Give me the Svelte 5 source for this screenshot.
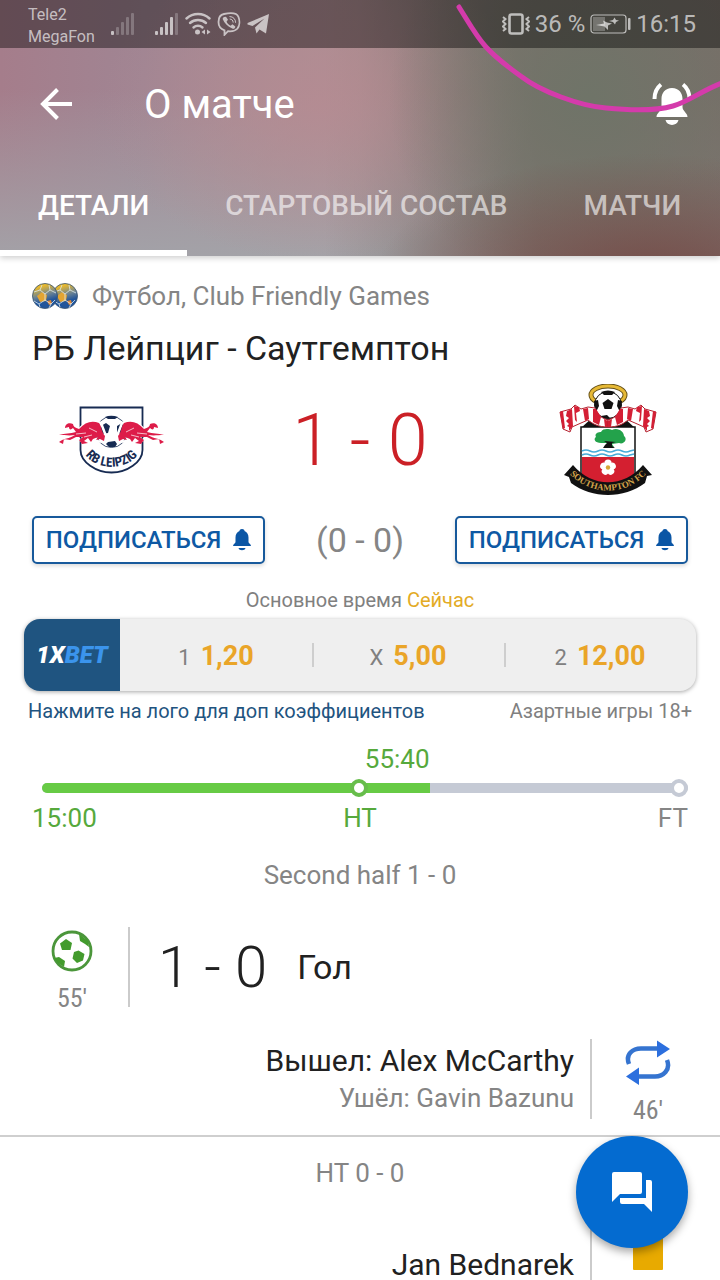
<script lang="ts">
    type Odd = { label: string; value: string };

    const tabs = ['Детали', 'Стартовый состав', 'Матчи'];
    let activeTab = $state(0);

    const odds: Odd[] = [
        { label: '1', value: '1,20' },
        { label: 'X', value: '5,00' },
        { label: '2', value: '12,00' }
    ];

    // share of the track, in percent
    const elapsed = 60;
    const halfTime = 49;

    const signalBars = [4, 8, 13, 18, 22];
</script>

{#snippet signal(strength: number)}
    <svg class="signal" width="24" height="24" viewBox="0 0 24 24">
        {#each signalBars as h, i}
            <rect x={i * 5} y={23 - h} width="3" height={h} rx="1" opacity={i < strength ? 1 : 0.35} />
        {/each}
    </svg>
{/snippet}

{#snippet subscribe()}
    <button class="subscribe">
        Подписаться
        <svg width="18" height="22" viewBox="0 0 18 22">
            <path d="M9 0C11 0 11.500 1 11.500 2C14 3 15.500 5.500 15.500 8.500V13C15.500 14.500 18 15 18 17H0C0 15 2.500 14.500 2.500 13V8.500C2.500 5.500 4 3 6.500 2C6.500 1 7 0 9 0ZM5.500 19H12.500C12 22 6 22 5.500 19Z" />
        </svg>
    </button>
{/snippet}

<div class="screen">
    <header>
        <div class="status">
            <div class="carriers">
                <span>Tele2</span>
                <span>MegaFon</span>
            </div>
            <div class="status-icons">
                {@render signal(1)}
                {@render signal(4)}
                <svg width="26" height="24" viewBox="0 0 26 24">
                    <g fill="none" stroke="currentColor" stroke-width="2.400" stroke-linecap="round">
                        <path d="M1.500 6.500C8 0.500 18 0.500 24.500 6.500" />
                        <path d="M5 11C9.500 7 16.500 7 21 11" />
                        <path d="M8.500 15.500C11 13.200 15 13.200 17.500 15.500" />
                    </g>
                    <circle cx="12.500" cy="20" r="2.500" />
                    <path d="M20 17.500V22.500L16.500 20ZM22 17.500V22.500L25.500 20Z" />
                </svg>
                <svg width="24" height="24" viewBox="0 0 24 24">
                    <path d="M7 2C14 0.500 20 1 21.500 5C23 9 22.500 14 20.500 16.500C18.500 18.800 14 19.500 11 19.200L7.500 22.800V18.300C3.500 17 1.500 14 1.500 10C1.500 5.500 3 2.800 7 2Z" fill="none" stroke="currentColor" stroke-width="1.800" />
                    <path d="M7 5L9 4.700L11 7.800L9.600 9.500C10.200 11.500 11.800 13 13.700 13.700L15.400 12.300L18.300 14.400C18.200 16.500 16.500 17 15.300 16.500C10.500 14.500 7.300 11 5.800 7.200C5.600 6.300 6 5.600 7 5Z" />
                    <path d="M12.500 4.500C16.500 4.800 18.500 7 18.600 10.800M12.700 7C15 7.200 16 8.400 16.200 10.600" fill="none" stroke="currentColor" stroke-width="1" />
                </svg>
                <svg width="23" height="22" viewBox="0 0 23 22">
                    <path d="M22 1L19 20.500L12.500 16.500L9.500 20.500L8 14.500L17.500 5.500L5.500 13L0.500 11.500V10Z" />
                </svg>
            </div>
            <div class="status-right">
                <svg width="28" height="24" viewBox="0 0 28 24">
                    <g fill="none" stroke="currentColor">
                        <rect x="7.500" y="2.500" width="13" height="19" rx="2" stroke-width="2.600" />
                        <path d="M1 5L3.500 7L1 9.500L3.500 12L1 14.500L3.500 17L1 19M27 5L24.500 7L27 9.500L24.500 12L27 14.500L24.500 17L27 19" stroke-width="2" />
                    </g>
                </svg>
                <span>36 %</span>
                <svg class="battery" width="41" height="20" viewBox="0 0 41 20">
                    <rect x="1" y="1" width="35" height="18" rx="3" fill="none" stroke="currentColor" stroke-width="1.200" />
                    <rect x="3" y="3" width="12" height="14" opacity="0.400" />
                    <rect x="38" y="4" width="2.500" height="12" rx="1" />
                    <path d="M6 11L14 9.500L13 6.500L17 8.500L22 9.500L18 11.500V16L14.500 12.500ZM19 7L23 6L24.500 3.500L26 6L29 6.500L26 8L25 10.500L23 8Z" />
                </svg>
                <span>16:15</span>
            </div>
        </div>

        <div class="toolbar">
            <button class="icon-button" aria-label="Назад">
                <svg width="32" height="32" viewBox="0 0 32 32" fill="none" stroke="#fff" stroke-width="4">
                    <path d="M32 16H3M17.500 1.500L3 16L17.500 30.500" />
                </svg>
            </button>
            <h1>О матче</h1>
            <button class="icon-button" aria-label="Уведомления">
                <svg width="40" height="44" viewBox="0 0 40 44" fill="#fff">
                    <path d="M20 6C27 6 30.500 11 30.500 17V25C30.500 29 35.500 31 35.500 35H4.500C4.500 31 9.500 29 9.500 25V17C9.500 11 13 6 20 6ZM13.500 38H26.500C25 44.500 15 44.500 13.500 38Z" />
                    <path d="M9 2.500C4.500 6 2.500 10.500 2.500 17M31 2.500C35.500 6 37.500 10.500 37.500 17" fill="none" stroke="#fff" stroke-width="4" />
                </svg>
            </button>
        </div>

        <nav class="tabs">
            {#each tabs as tab, i}
                <button class="tab" class:active={activeTab === i} onclick={() => (activeTab = i)}>{tab}</button>
            {/each}
        </nav>

        <svg class="scribble" width="264" height="118" viewBox="0 0 264 118" fill="none">
            <path d="M3 7C13 23 20 36 30 47C40 58 52 67 66 77C84 91 124 106 150 108C180 111 203 110 217 106C232 102 245 91 266 83" stroke="#d43bab" stroke-width="5" stroke-linecap="round" />
        </svg>
    </header>

    <main>
        <section class="summary">
            <div class="league">
                <svg width="46" height="26" viewBox="0 0 46 26">
                    <defs>
                        <linearGradient id="ball" x1="0" y1="0" x2="0.300" y2="1">
                            <stop offset="0.200" stop-color="#e9b92c" />
                            <stop offset="0.550" stop-color="#6c8494" />
                            <stop offset="0.800" stop-color="#24569a" />
                        </linearGradient>
                    </defs>
                    {#each [33, 13] as cx}
                        <g transform="translate({cx} 13)">
                            <circle r="12.500" fill="url(#ball)" stroke="#35506f" stroke-width="0.800" />
                            <path d="M-8 0L-3 -4L2 -1L1 5L-5 6Z" fill="#e3a532" />
                            <path d="M-11 5L-5 7L-1 11L-7 10ZM3 5L8 3L10 6L6 10L2 9Z" fill="#1d559f" />
                            <path d="M2 5L6 4L7 8L4 9Z" fill="#e08634" />
                            <path d="M-11 -4L-5 -6L0 -2L5 -6L11 -3M0 -2V4L-6 8L-11 5M0 4L6 8L10 4M-5 -6L-3 -11M5 -6L4 -11M6 8L4 12M-6 8L-5 11" fill="none" stroke="#dce8ee" stroke-width="0.800" />
                        </g>
                    {/each}
                </svg>
                <span>Футбол, Club Friendly Games</span>
            </div>
            <h2>РБ Лейпциг - Саутгемптон</h2>

            <div class="teams">
                <div class="crest">
                    <svg width="106" height="68" viewBox="0 0 106 68">
                        <path d="M21.500 1.500H83.500V44C83.500 56 68 66.500 52.500 66.500C37 66.500 21.500 56 21.500 44Z" fill="#fff" stroke="#172b52" stroke-width="1.800" />
                        <circle cx="52.500" cy="26" r="15.500" fill="#fff" stroke="#172b52" stroke-width="0.800" />
                        <path d="M42 20L47 17L51 20L49 27L43 28L40 24ZM58 20L63 17L65 21L63 28L58 27ZM46 11Q52 8.500 59 11L56 13H49ZM49 36L56 35L58 38L56 41H50L47 38Z" fill="#172b52" />
                        <path id="bull-edge" d="M0 29C7 27 14 29 19 25C25 16 33 14 42 17L47 30L45 36L36 35L28 39L17 31L9 34L2 38" fill="none" stroke="#fff" stroke-width="2.500" />
                        <path id="bull" d="M0 36C5 32 10 33 16 29C10 30 6 29 0 29C6 27 11 28 17 26L14 22C12 24 10 24 10 21L6 22C6 18 10 16 14 18C14 20 16 22 20 23C26 16 33 14 40 17C43 21 42 25 46 30L45 35L41 33L37 34L39 31L34 33L32 36L29 32L25 35L29 37L23 38L20 34L24 31L17 31L11 34L5 33L4 38Z" fill="#dd1c49" />
                        <path id="bull-light" d="M17 28L27 27M30 22L38 26M25 31L33 29" stroke="#fff" stroke-width="0.700" />
                        <use href="#bull-edge" transform="matrix(-1 0 0 1 105 0)" />
                        <use href="#bull" transform="matrix(-1 0 0 1 105 0)" />
                        <use href="#bull-light" transform="matrix(-1 0 0 1 105 0)" />
                        <path id="leipzig" d="M24 45C34 66 71 66 81 45" fill="none" />
                        <text class="condensed" font-size="13" fill="#172b52" text-anchor="middle"><textPath href="#leipzig" startOffset="50%">RB LEIPZIG</textPath></text>
                    </svg>
                </div>
                <div class="score">1 - 0</div>
                <div class="crest">
                    <svg width="98" height="112" viewBox="0 0 98 112">
                        <ellipse cx="49" cy="11" rx="17" ry="9" fill="none" stroke="#66511a" stroke-width="5" />
                        <ellipse cx="49" cy="11" rx="17" ry="9" fill="none" stroke="#e6b936" stroke-width="3" />
                        <path d="M22 44L34 33H64L76 44L49 50Z" fill="#111" />
                        <circle cx="49" cy="21" r="13.500" fill="#fff" stroke="#111" />
                        <path d="M49 15L54.500 19L52.500 25H45.500L43.500 19ZM42 8Q49 5 56 8L53 11H45ZM35 17L39 16L40 22L37 28ZM63 17L59 16L58 22L61 28ZM42 32L48 31L51 34H44Z" fill="#111" />
                        <path d="M22 43V91L49 103L76 91V43Z" fill="#fff" stroke="#111" stroke-width="1.500" />
                        <path d="M23 73H75V92L49 103L23 92Z" fill="#d41f30" />
                        <path d="M23 67Q27 65 31 67T39 67T47 67T55 67T63 67T71 67L75 66M23 71Q27 69 31 71T39 71T47 71T55 71T63 71T71 71L75 70" fill="none" stroke="#46abd8" stroke-width="1.600" />
                        <g transform="translate(1 5)">
                            <path d="M46 58L47 54L41 54C35 54 33 50 36 48C34 44 39 43 41 43C43 39 49 40 52 41C58 38 64 43 64 47C68 50 64 56 59 54L52 55L54 58Z" fill="#23a24b" />
                            <path d="M47 54L45 56L43 59H55L52 57V54L56 53L44 52Z" fill="#111" />
                        </g>
                        <g fill="#fff">
                            {#each [0, 72, 144, 216, 288] as angle}
                                <circle cx="49" cy="79" r="3.600" transform="rotate({angle} 49 83.500)" />
                            {/each}
                        </g>
                        <circle cx="49" cy="83.500" r="2.200" fill="#d7a737" />
                        <g id="scarf">
                            <path d="M1 28L12 25L16 21L22 25L29 23L36 24C39 31 42 34 49 36V43C39 43 34 40 29 36L22 39L13 43L11 48L4 45Z" fill="#fff" stroke="#b52330" stroke-width="1" />
                            <path d="M1 28L4 27L6 44L4 45ZM8 27L13 25L14 42L10 47L10 43L8 42L10 40L7 37L10 34L7 32ZM15 22L20 23L21 27L17 29L18 38L16 36ZM24 25L29 24L30 35L26 37ZM34 25L37 25L42 33L40 41L34 38ZM45 35L49 37V43L46 43Z" fill="#d41f35" />
                        </g>
                        <use href="#scarf" transform="matrix(-1 0 0 1 98 0)" />
                        <path d="M14 81C33 104 65 104 84 81L93 91L88 92L86 99C65 115 33 115 12 99L10 93L5 91Z" fill="#111" />
                        <path id="southampton" d="M8 87C29 113 69 113 90 87" fill="none" />
                        <text class="serif" font-size="9" fill="#d4a44a" text-anchor="middle"><textPath href="#southampton" startOffset="50%">SOUTHAMPTON FC</textPath></text>
                    </svg>
                </div>
            </div>

            <div class="follow">
                {@render subscribe()}
                <span class="half-score">(0 - 0)</span>
                {@render subscribe()}
            </div>
        </section>

        <section class="betting">
            <p class="market">Основное время <em>Сейчас</em></p>
            <div class="odds">
                <a class="bookmaker" href="#bet"><i>1X</i><b>BET</b></a>
                {#each odds as odd}
                    <button class="odd">{odd.label} <strong>{odd.value}</strong></button>
                {/each}
            </div>
            <div class="notes">
                <span class="hint">Нажмите на лого для доп коэффициентов</span>
                <span>Азартные игры 18+</span>
            </div>
        </section>

        <section class="timeline">
            <div class="track-box">
                <div class="clock" style="width: {elapsed}%">55:40</div>
                <div class="track">
                    <div class="elapsed" style="width: {elapsed}%"></div>
                    <span class="dot" style="left: {halfTime}%"></span>
                    <span class="dot end"></span>
                </div>
            </div>
            <div class="marks">
                <span>15:00</span>
                <span>HT</span>
                <span class="full">FT</span>
            </div>
        </section>

        <h3>Second half 1 - 0</h3>
        <div class="event">
            <div class="when">
                <svg width="48" height="48" viewBox="0 0 48 48">
                    <circle cx="24" cy="24" r="19" fill="none" stroke="#4b963b" stroke-width="2.800" />
                    <path d="M18 12L24 16L22.500 23H14L12 16.500ZM30.500 23.500L36.500 27L35 33.500L29 36L24.500 31.500L26 25ZM31 7L40 14L41 20L37 17L32 14ZM6 31L11 30L17 34L16 40L10 36Z" fill="#439b2d" />
                </svg>
                <span>55'</span>
            </div>
            <div class="what goal">
                <span class="event-score">1 - 0</span>
                <span class="event-name">Гол</span>
            </div>
        </div>
        <div class="event away">
            <div class="when">
                <svg width="48" height="48" viewBox="0 0 48 48">
                    <path d="M5 25C1 15 9 9.500 17 9.500H36M43 21C47 31 39 37.500 31 37.500H12" fill="none" stroke="#3574d0" stroke-width="4.500" />
                    <path d="M33 1.500L46 10L33 18.500ZM15 28.500L2 37.500L15 46Z" fill="#2c6fde" />
                </svg>
                <span>46'</span>
            </div>
            <div class="what">
                <p>Вышел: Alex McCarthy</p>
                <p class="out">Ушёл: Gavin Bazunu</p>
            </div>
        </div>

        <h3 class="period">HT 0 - 0</h3>
        <div class="event away">
            <div class="when">
                <svg width="48" height="48" viewBox="0 0 48 48">
                    <rect x="9" y="4" width="30" height="41" rx="1" fill="#e8aa00" />
                </svg>
            </div>
            <div class="what">
                <p>Jan Bednarek</p>
            </div>
        </div>
    </main>

    <button class="chat" aria-label="Чат">
        <svg width="40" height="40" viewBox="0 0 40 40" fill="#fff">
            <path d="M2 0H28Q30 0 30 2V20Q30 22 28 22H8L0 30V2Q0 0 2 0ZM34 8H38Q40 8 40 10V40L32 32H10Q8 32 8 30V26H34Z" />
        </svg>
    </button>
</div>

<style>
    :global(body) {
        margin: 0;
    }

    .screen {
        position: relative;
        height: 100vh;
        overflow: hidden;
        background: #fff;
        color: #212121;
        font-family: Roboto, 'Noto Sans', sans-serif;
    }

    h1, h2, h3, p {
        margin: 0;
        font-weight: 400;
    }

    button {
        padding: 0;
        border: none;
        background: none;
        color: inherit;
        font: inherit;
        cursor: pointer;
    }

    svg {
        display: block;
        flex: none;
    }

    header {
        position: relative;
        color: #fff;
        background:
            radial-gradient(ellipse 38% 50% at 90% 110%, #754b47, transparent),
            radial-gradient(ellipse 28% 80% at 82% 38%, #6f7468, transparent),
            radial-gradient(ellipse 30% 60% at 44% 42%, rgba(182, 139, 146, 0.8), transparent),
            linear-gradient(to right, transparent 45%, rgba(120, 108, 102, 0.8) 75%),
            linear-gradient(to bottom, transparent 35%, rgba(163, 165, 170, 0.9)),
            linear-gradient(to right, #a57d8b, #a08593 20%, #ae9094 50%, #8b8480 70%, #7d7771);
        box-shadow: 0 2px 6px rgba(0, 0, 0, 0.2);
    }

    .status {
        display: flex;
        align-items: center;
        height: 48px;
        padding: 0 24px 0 28px;
        background: rgba(0, 0, 0, 0.4);
        color: rgba(255, 255, 255, 0.65);
        fill: currentColor;
    }

    .carriers {
        display: flex;
        flex-direction: column;
        padding-top: 4px;
        font-size: 16px;
        line-height: 22px;
    }

    .status-icons {
        display: flex;
        flex: 1;
        align-items: center;
        gap: 6px;
        padding-left: 16px;
    }

    .signal:first-child {
        margin-right: 14px;
    }

    .status-right {
        display: flex;
        align-items: center;
        gap: 5px;
        font-size: 24px;
    }

    .toolbar {
        display: flex;
        align-items: center;
        height: 112px;
        padding: 0 28px 0 40px;
    }

    .toolbar h1 {
        flex: 1;
        padding-left: 72px;
        font-size: 40px;
    }

    .tabs {
        display: flex;
        height: 96px;
    }

    .tab {
        padding: 0 38px;
        border-bottom: 6px solid transparent;
        color: rgba(255, 255, 255, 0.6);
        font-size: 28px;
        font-weight: 500;
        text-transform: uppercase;
        white-space: nowrap;
    }

    .tab.active {
        border-color: #fff;
        color: #fff;
    }

    .scribble {
        position: absolute;
        top: 0;
        right: 0;
        pointer-events: none;
    }

    .summary {
        padding: 24px 32px 0;
    }

    .league {
        display: flex;
        align-items: center;
        gap: 14px;
        color: #858585;
        font-size: 26px;
        line-height: 32px;
    }

    h2 {
        margin-top: 16px;
        font-size: 34px;
        line-height: 40px;
    }

    .teams {
        display: flex;
        align-items: center;
        justify-content: space-between;
        height: 128px;
        margin-top: 8px;
    }

    .crest {
        display: flex;
        justify-content: center;
        width: 160px;
    }

    .condensed {
        font-family: 'Roboto Condensed', Roboto, sans-serif;
        font-weight: 700;
    }

    .serif {
        font-family: 'Liberation Serif', serif;
        font-weight: 700;
    }

    .score {
        color: #cb2026;
        font-size: 72px;
        font-weight: 300;
    }

    .follow {
        display: flex;
        align-items: center;
        justify-content: space-between;
        margin-top: 12px;
    }

    .subscribe {
        display: flex;
        align-items: center;
        justify-content: center;
        gap: 12px;
        box-sizing: border-box;
        width: 233px;
        height: 48px;
        border: 2px solid #17599b;
        border-radius: 5px;
        background: #fff;
        box-shadow: 0 2px 4px rgba(0, 0, 0, 0.15);
        color: #0e59a4;
        fill: #0b56a5;
        font-size: 24px;
        font-weight: 500;
        text-transform: uppercase;
    }

    .half-score {
        color: #858585;
        font-size: 34px;
        line-height: 40px;
    }

    .betting {
        padding: 0 24px;
        color: #808080;
        font-size: 20px;
        line-height: 24px;
    }

    .market {
        padding: 24px 0 7px;
        text-align: center;
    }

    .market em {
        color: #e3ab26;
        font-style: normal;
    }

    .odds {
        display: flex;
        height: 72px;
        border-radius: 16px;
        overflow: hidden;
        background: #efefef;
        box-shadow: 0 1px 4px rgba(0, 0, 0, 0.35);
    }

    .bookmaker {
        display: flex;
        align-items: center;
        justify-content: center;
        width: 96px;
        background: #1f5480;
        color: #fff;
        font-size: 24px;
        font-style: italic;
        font-weight: 900;
        text-decoration: none;
    }

    .bookmaker b {
        color: #3b94ec;
        font-weight: 900;
    }

    .odd {
        display: flex;
        flex: 1;
        align-items: baseline;
        justify-content: center;
        gap: 10px;
        font-size: 22px;
        line-height: 74px;
    }

    .odd + .odd {
        background: linear-gradient(#cecece, #cecece) left center / 2px 24px no-repeat;
    }

    .odd strong {
        color: #eaa528;
        font-size: 27px;
        font-weight: 700;
    }

    .notes {
        display: flex;
        justify-content: space-between;
        padding: 8px 4px 0;
    }

    .hint {
        color: #1f5480;
    }

    .timeline {
        padding: 20px 32px 5px;
        color: #56a93c;
        font-size: 26px;
        line-height: 32px;
    }

    .track-box {
        padding-left: 10px;
    }

    .clock {
        text-align: right;
    }

    .track {
        position: relative;
        height: 10px;
        margin: 8px 0 9px;
        border-radius: 5px;
        background: #c5cad5;
    }

    .elapsed {
        height: 100%;
        border-radius: 5px 0 0 5px;
        background: #67cb45;
    }

    .dot {
        position: absolute;
        top: 50%;
        box-sizing: border-box;
        width: 18px;
        height: 18px;
        border: 4px solid #67bd4b;
        border-radius: 50%;
        background: #fff;
        transform: translate(-50%, -50%);
    }

    .dot.end {
        right: 0;
        border-color: #c5cad5;
        transform: translateY(-50%);
    }

    .marks {
        display: grid;
        grid-template-columns: 1fr auto 1fr;
    }

    .marks .full {
        color: #858585;
        text-align: right;
    }

    h3 {
        color: #858585;
        font-size: 26px;
        line-height: 72px;
        text-align: center;
    }

    h3.period {
        border-top: 2px solid #cfcfcf;
    }

    .event {
        display: flex;
        padding: 16px;
    }

    .away {
        flex-direction: row-reverse;
        text-align: right;
    }

    .when {
        display: flex;
        flex-direction: column;
        align-items: center;
        gap: 12px;
        width: 112px;
        height: 80px;
        border-right: 2px solid #cbcbcb;
        color: #858585;
        font-family: 'Roboto Condensed', Roboto, sans-serif;
        font-size: 26px;
        line-height: 22px;
    }

    .away .when {
        border-right: none;
        border-left: 2px solid #cbcbcb;
    }

    .what {
        display: flex;
        flex: 1;
        flex-direction: column;
        justify-content: center;
        padding: 0 16px;
        font-size: 30px;
        line-height: 38px;
    }

    .goal {
        flex-direction: row;
        align-items: center;
        justify-content: flex-start;
        gap: 30px;
        padding-left: 28px;
    }

    .event-score {
        font-size: 58px;
        font-weight: 300;
    }

    .event-name {
        font-size: 34px;
    }

    .out {
        color: #858585;
        font-size: 26px;
        line-height: 36px;
    }

    .chat {
        position: absolute;
        right: 32px;
        bottom: 32px;
        display: flex;
        align-items: center;
        justify-content: center;
        width: 112px;
        height: 112px;
        border-radius: 50%;
        background: #046bd0;
        box-shadow: 0 4px 8px rgba(0, 0, 0, 0.35);
    }
</style>
